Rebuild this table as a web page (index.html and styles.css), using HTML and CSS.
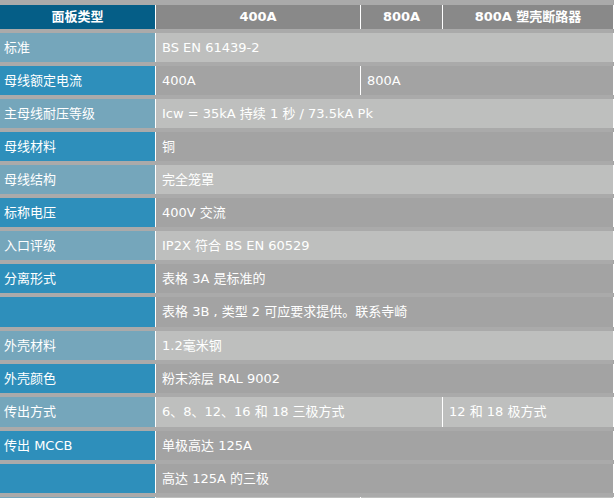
FILE: index.html
```html
<!DOCTYPE html>
<html lang="zh">
<head>
<meta charset="utf-8">
<title>面板类型</title>
<link rel="stylesheet" href="styles.css">
</head>
<body>
<div class="spec">
  <div class="cell head head-main">面板类型</div>
  <div class="cell head">400A</div>
  <div class="cell head">800A</div>
  <div class="cell head">800A 塑壳断路器</div>

  <div class="cell lab light">标准</div>
  <div class="cell val light span3">BS EN 61439-2</div>

  <div class="cell lab dark">母线额定电流</div>
  <div class="cell val dark">400A</div>
  <div class="cell val dark span2">800A</div>

  <div class="cell lab light">主母线耐压等级</div>
  <div class="cell val light span3">Icw = 35kA 持续 1 秒 / 73.5kA Pk</div>

  <div class="cell lab dark">母线材料</div>
  <div class="cell val dark span3">铜</div>

  <div class="cell lab light">母线结构</div>
  <div class="cell val light span3">完全笼罩</div>

  <div class="cell lab dark">标称电压</div>
  <div class="cell val dark span3">400V 交流</div>

  <div class="cell lab light">入口评级</div>
  <div class="cell val light span3">IP2X 符合 BS EN 60529</div>

  <div class="cell lab dark">分离形式</div>
  <div class="cell val dark span3">表格 3A 是标准的</div>

  <div class="cell tall lab dark"></div>
  <div class="cell tall val dark span3">表格 3B , 类型 2 可应要求提供。联系寺崎</div>

  <div class="cell lab light">外壳材料</div>
  <div class="cell val light span3">1.2毫米钢</div>

  <div class="cell lab dark">外壳颜色</div>
  <div class="cell val dark span3">粉末涂层 RAL 9002</div>

  <div class="cell tall lab light">传出方式</div>
  <div class="cell tall val light span2">6、8、12、16 和 18 三极方式</div>
  <div class="cell tall val light">12 和 18 极方式</div>

  <div class="cell lab dark">传出 MCCB</div>
  <div class="cell val dark span3">单极高达 125A</div>

  <div class="cell lab dark"></div>
  <div class="cell val dark span3">高达 125A 的三极</div>

  <div class="cell lab light"></div>
  <div class="cell val light"></div>
  <div class="cell val light span2"></div>
</div>
</body>
</html>
```

FILE: styles.css
```css
html, body {
  margin: 0;
  padding: 0;
  background: #aaaaaa;
}

.spec {
  display: grid;
  grid-template-columns: 156px 205px 82px 171px;
  row-gap: 4px;
  padding-top: 5px;
  width: 614px;
  background: #aaaaaa;
  font-family: "DejaVu Sans", "Noto Sans CJK SC", sans-serif;
  font-size: 13px;
  color: #ffffff;
}

.cell {
  box-sizing: border-box;
  height: 29px;
  line-height: 29px;
  padding: 0 6px;
  border-right: 1px solid #ffffff;
  white-space: nowrap;
  overflow: hidden;
}

.cell.tall {
  height: 30px;
  line-height: 30px;
}

.head {
  height: 24px;
  line-height: 24px;
  background: #898989;
  font-weight: bold;
  text-align: center;
}

.head-main {
  background: #055e87;
}

.lab {
  padding-left: 4px;
}

.lab.light {
  background: #75a6bb;
}

.lab.dark {
  background: #2e8fbb;
}

.val.light {
  background: #bebfbe;
}

.val.dark {
  background: #a3a3a3;
}

.span2 {
  grid-column: span 2;
}

.span3 {
  grid-column: span 3;
}
```
